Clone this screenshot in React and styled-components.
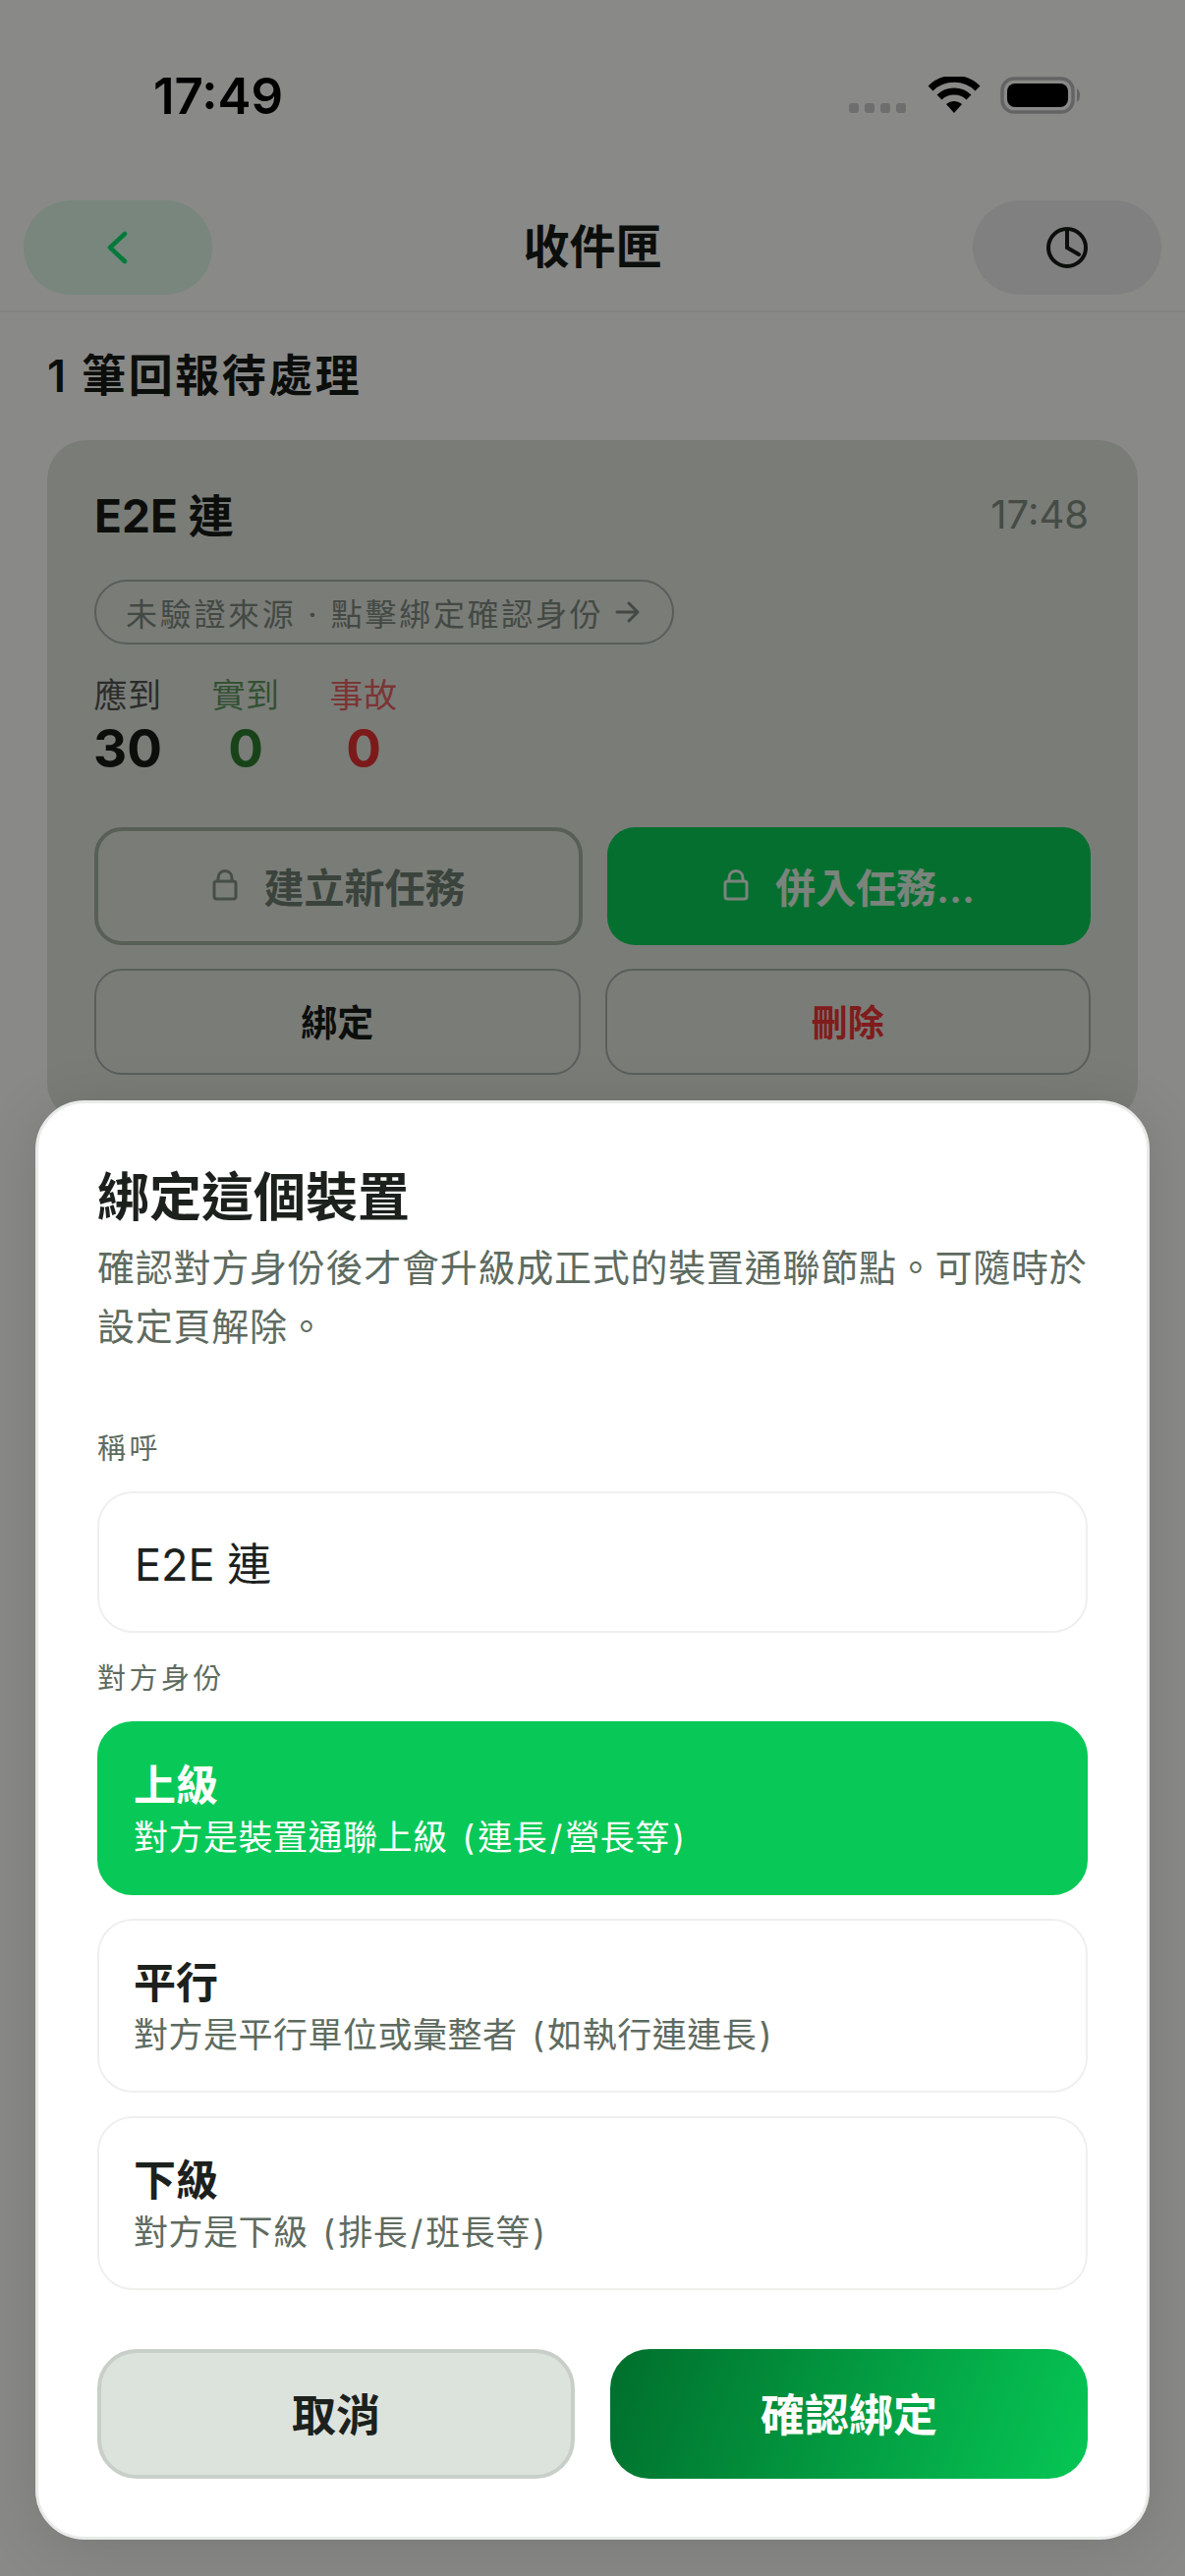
import styled, { createGlobalStyle } from "styled-components";

const FONT = `Inter, "Noto Sans CJK TC", "Noto Sans", sans-serif`;

const GlobalStyle = createGlobalStyle`
  * { box-sizing: border-box; }
  html, body { margin: 0; padding: 0; background: #f9f9f7; }
  body { font-family: ${FONT}; }
`;

const Screen = styled.div`
  position: relative;
  width: 1206px;
  height: 2622px;
  overflow: hidden;
  background: #f9f9f7;
  color: #161a17;
`;
const StatusBar = styled.div`
  display: flex;
  align-items: center;
  justify-content: space-between;
  height: 196px;
  padding: 0 104px 2px 156px;
`;
const Clock = styled.span`
  font-size: 51px;
  font-weight: 600;
  color: #000;
`;
const StatusIcons = styled.div`
  display: flex;
  align-items: flex-end;
  gap: 20px;
`;
const Nav = styled.header`
  display: grid;
  grid-template-columns: 192px 1fr 192px;
  align-items: center;
  height: 122px;
  padding: 8px 24px 18px;
  border-bottom: 2px solid #eceeea;
`;
const NavButton = styled.button`
  display: flex;
  align-items: center;
  justify-content: center;
  width: 192px;
  height: 96px;
  padding: 0;
  border: none;
  border-radius: 48px;
  background: ${(props) => (props.$tint ? "#daf5e3" : "#e9e9e9")};
`;
const NavTitle = styled.h1`
  margin: 0;
  padding-bottom: 3px;
  text-align: center;
  font-size: 47px;
  line-height: 60px;
  font-weight: 600;
`;
const Content = styled.main`
  padding: 0 48px;
`;
const Heading = styled.h2`
  margin: 0;
  padding-top: 36px;
  height: 130px;
  font-size: 45px;
  line-height: 58px;
  font-weight: 600;
  letter-spacing: 2.5px;
`;
const Card = styled.section`
  padding: 45px 48px 48px;
  border-radius: 40px;
  background: #dfe2db;
`;
const CardHead = styled.div`
  display: flex;
  align-items: center;
  justify-content: space-between;
  height: 58px;
`;
const CardName = styled.span`
  font-size: 46px;
  font-weight: 700;
`;
const CardTime = styled.span`
  margin: 3px 2px 0 0;
  font-size: 40px;
  color: #7e8a80;
`;
const Pill = styled.div`
  display: inline-flex;
  align-items: center;
  gap: 12px;
  height: 66px;
  margin-top: 39px;
  padding: 0 32px 0 30px;
  border: 2px solid #a0aba2;
  border-radius: 33px;
  font-size: 32px;
  letter-spacing: 2.7px;
  color: #7a867c;
`;
const Stats = styled.div`
  display: flex;
  gap: 52px;
  margin-top: 30px;
`;
const Stat = styled.div`
  display: flex;
  flex-direction: column;
  align-items: center;
  width: 68px;
  color: ${(props) => props.$color};
`;
const StatLabel = styled.span`
  font-size: 34px;
  line-height: 44px;
  letter-spacing: 0.5px;
  white-space: nowrap;
  opacity: 0.72;
`;
const StatValue = styled.span`
  font-size: 53px;
  line-height: 64px;
  font-weight: 700;
`;
const ActionGrid = styled.div`
  display: grid;
  grid-template-columns: ${(props) => props.$columns};
  gap: 25px;
  margin-top: ${(props) => props.$top};
`;
const TaskButton = styled.button`
  display: flex;
  align-items: center;
  justify-content: center;
  gap: 27px;
  height: 120px;
  padding: 0 0 3px;
  border: ${(props) => (props.$primary ? "none" : "4px solid #9fae9f")};
  border-radius: 28px;
  background: ${(props) => (props.$primary ? "#09cb57" : "transparent")};
  color: ${(props) => (props.$primary ? "#e0f0e2" : "#6a7b6d")};
  font-family: ${FONT};
  font-size: 41px;
  font-weight: 600;
`;
const SmallButton = styled.button`
  height: 108px;
  padding: 0 0 2px;
  border: 2px solid #a3ada5;
  border-radius: 28px;
  background: transparent;
  color: ${(props) => (props.$danger ? "#e93333" : "#161a17")};
  font-family: ${FONT};
  font-size: 37px;
  font-weight: 600;
`;
const Overlay = styled.div`
  position: absolute;
  inset: 0;
  display: flex;
  align-items: flex-end;
  padding: 0 36px 37px;
  background: rgba(0, 0, 0, 0.45);
`;
const Modal = styled.div`
  width: 1134px;
  height: 1465px;
  padding: 62px 60px 60px;
  border: 3px solid #e8ebe8;
  border-radius: 50px;
  background: #fff;
  box-shadow: 0 8px 60px rgba(0, 0, 0, 0.12);
`;
const ModalTitle = styled.h2`
  margin: 0;
  font-size: 53px;
  line-height: 68px;
  font-weight: 700;
  color: #1c211d;
`;
const ModalText = styled.p`
  margin: 7px 0 0;
  font-size: 38px;
  line-height: 60px;
  letter-spacing: 0.75px;
  color: #5e6b60;
`;
const FieldLabel = styled.div`
  margin-top: ${(props) => props.$top};
  font-size: 29px;
  line-height: 40px;
  letter-spacing: 3.5px;
  color: #5e6b60;
`;
const NameInput = styled.input`
  display: block;
  width: 100%;
  height: 144px;
  margin-top: ${(props) => props.$top};
  padding: 0 36px 2px;
  border: 2px solid #edf0ed;
  border-radius: 36px;
  background: #fff;
  outline: none;
  font-family: ${FONT};
  font-size: 45px;
  color: #1c211d;
`;
const Options = styled.div`
  display: flex;
  flex-direction: column;
  gap: 24px;
  margin-top: 23px;
`;
const Option = styled.div`
  height: 177px;
  padding: 35px 35px 0;
  border: 2px solid ${(props) => (props.$selected ? "#08c957" : "#edf0ed")};
  border-radius: 36px;
  background: ${(props) => (props.$selected ? "#08c957" : "#fff")};
  color: ${(props) => (props.$selected ? "#fff" : "#1c211d")};
`;
const OptionTitle = styled.div`
  font-size: 43px;
  line-height: 56px;
  font-weight: 700;
`;
const OptionText = styled.div`
  margin-top: 2px;
  font-size: 35px;
  line-height: 46px;
  letter-spacing: 0.5px;
  word-spacing: 2px;
  color: ${(props) => (props.$selected ? "#fff" : "#5e6b60")};
`;
const Punct = styled.span`
  margin: 0 2.5px;
`;
const Footer = styled.div`
  display: grid;
  grid-template-columns: 1fr 1fr;
  gap: 36px;
  margin-top: 60px;
`;
const FooterButton = styled.button`
  height: 132px;
  padding: 0 0 3px;
  border: ${(props) => (props.$confirm ? "none" : "4px solid #c8cfc8")};
  border-radius: 40px;
  background: ${(props) =>
    props.$confirm ? "linear-gradient(110deg, #006e2c, #06c755)" : "#dce3dc"};
  color: ${(props) => (props.$confirm ? "#fff" : "#1c211d")};
  font-family: ${FONT};
  font-size: 45px;
  font-weight: 700;
`;

function SignalDots() {
  return (
    <svg width="60" height="12" viewBox="0 0 60 12">
      <g fill="#c8c8c8">
        <rect x="0" y="1" width="10" height="10" rx="3" />
        <rect x="16" y="1" width="10" height="10" rx="3" />
        <rect x="32" y="1" width="10" height="10" rx="3" />
        <rect x="48" y="1" width="10" height="10" rx="3" />
      </g>
    </svg>
  );
}

function Wifi() {
  return (
    <svg width="54" height="38" viewBox="0 0 54 38" fill="none">
      <path d="M3 12 C16 -1 38 -1 51 12" stroke="#000" strokeWidth="7" />
      <path d="M12 21 C20 13 34 13 42 21" stroke="#000" strokeWidth="7" />
      <path d="M19 28 L27 37 L35 28 C30 24 24 24 19 28 Z" fill="#000" />
    </svg>
  );
}

function Battery() {
  return (
    <svg width="84" height="38" viewBox="0 0 84 38">
      <rect x="2" y="2" width="72" height="34" rx="12" fill="none" stroke="#b6b6b6" strokeWidth="3.5" />
      <rect x="7" y="7" width="62" height="24" rx="8" fill="#000" />
      <path d="M78 12 C82 14 82 24 78 26 Z" fill="#b6b6b6" />
    </svg>
  );
}

function BackIcon() {
  return (
    <svg width="24" height="36" viewBox="0 0 24 36" fill="none">
      <path d="M19 4 L4 18 L19 32" stroke="#09dd6a" strokeWidth="4.5" strokeLinecap="round" strokeLinejoin="round" />
    </svg>
  );
}

function HistoryIcon() {
  return (
    <svg width="44" height="44" viewBox="0 0 44 44" fill="none" stroke="#161a17" strokeWidth="4" strokeLinecap="round">
      <circle cx="22" cy="22" r="19" />
      <path d="M22 4 V22 L34 29" />
    </svg>
  );
}

function LockIcon({ color }) {
  return (
    <svg width="26" height="32" viewBox="0 0 26 32" fill="none" stroke={color} strokeWidth="3" strokeLinejoin="round">
      <rect x="2" y="12" width="22" height="18" rx="2.5" />
      <path d="M6 12 V9 C6 -1 20 -1 20 9 V12" />
    </svg>
  );
}

function ArrowIcon() {
  return (
    <svg width="26" height="24" viewBox="0 0 26 24" fill="none" stroke="#7a867c" strokeWidth="3" strokeLinecap="round" strokeLinejoin="round">
      <path d="M2 12 H23 M14 3 L23 12 L14 21" />
    </svg>
  );
}

const roles = [
  { title: "上級", text: "對方是裝置通聯上級 (連長/營長等)", selected: true },
  { title: "平行", text: "對方是平行單位或彙整者 (如執行連連長)" },
  { title: "下級", text: "對方是下級 (排長/班長等)" },
];

// latin brackets and slash sit wider in the original font
function spaced(text) {
  return text
    .split(/([()/])/)
    .map((part, i) => (/^[()/]$/.test(part) ? <Punct key={i}>{part}</Punct> : part));
}

function App() {
  return (
    <Screen>
      <GlobalStyle />
      <StatusBar>
        <Clock>17:49</Clock>
        <StatusIcons>
          <SignalDots />
          <Wifi />
          <Battery />
        </StatusIcons>
      </StatusBar>
      <Nav>
        <NavButton $tint>
          <BackIcon />
        </NavButton>
        <NavTitle>收件匣</NavTitle>
        <NavButton>
          <HistoryIcon />
        </NavButton>
      </Nav>
      <Content>
        <Heading>1 筆回報待處理</Heading>
        <Card>
          <CardHead>
            <CardName>E2E 連</CardName>
            <CardTime>17:48</CardTime>
          </CardHead>
          <Pill>
            未驗證來源 · 點擊綁定確認身份
            <ArrowIcon />
          </Pill>
          <Stats>
            <Stat $color="#161a17">
              <StatLabel>應到</StatLabel>
              <StatValue>30</StatValue>
            </Stat>
            <Stat $color="#2c7a2e">
              <StatLabel>實到</StatLabel>
              <StatValue>0</StatValue>
            </Stat>
            <Stat $color="#e23030">
              <StatLabel>事故</StatLabel>
              <StatValue>0</StatValue>
            </Stat>
          </Stats>
          <ActionGrid $columns="497px 492px" $top="48px">
            <TaskButton>
              <LockIcon color="#7f8f82" />
              建立新任務
            </TaskButton>
            <TaskButton $primary>
              <LockIcon color="#e0f0e2" />
              併入任務...
            </TaskButton>
          </ActionGrid>
          <ActionGrid $columns="1fr 1fr" $top="24px">
            <SmallButton>綁定</SmallButton>
            <SmallButton $danger>刪除</SmallButton>
          </ActionGrid>
        </Card>
      </Content>
      <Overlay>
        <Modal>
          <ModalTitle>綁定這個裝置</ModalTitle>
          <ModalText>確認對方身份後才會升級成正式的裝置通聯節點。可隨時於設定頁解除。</ModalText>
          <FieldLabel $top="75px">稱呼</FieldLabel>
          <NameInput readOnly value="E2E 連" $top="23px" />
          <FieldLabel $top="27px">對方身份</FieldLabel>
          <Options>
            {roles.map((role) => (
              <Option key={role.title} $selected={role.selected}>
                <OptionTitle>{role.title}</OptionTitle>
                <OptionText $selected={role.selected}>{spaced(role.text)}</OptionText>
              </Option>
            ))}
          </Options>
          <Footer>
            <FooterButton>取消</FooterButton>
            <FooterButton $confirm>確認綁定</FooterButton>
          </Footer>
        </Modal>
      </Overlay>
    </Screen>
  );
}

export default App;
